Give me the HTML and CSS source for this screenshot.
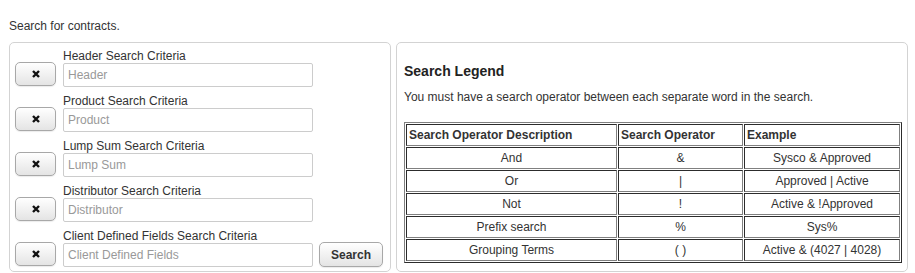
FILE: index.html
```html
<!DOCTYPE html>
<html lang="en">
<head>
    <meta charset="UTF-8">
    <title>Contract Search</title>
    <link rel="stylesheet" href="styles.css">
</head>
<body>
    <p class="intro">Search for contracts.</p>
    <div class="search-page">
        <div class="panel criteria-panel">
            <div class="criteria-row">
                <button class="clear-btn" title="Clear"><svg width="8" height="8" viewBox="0 0 8 8"><path d="M1 1L7 7M7 1L1 7" stroke="#111" stroke-width="2.4"/></svg></button>
                <div class="field">
                    <label for="header">Header Search Criteria</label>
                    <input type="text" id="header" placeholder="Header">
                </div>
            </div>
            <div class="criteria-row">
                <button class="clear-btn" title="Clear"><svg width="8" height="8" viewBox="0 0 8 8"><path d="M1 1L7 7M7 1L1 7" stroke="#111" stroke-width="2.4"/></svg></button>
                <div class="field">
                    <label for="product">Product Search Criteria</label>
                    <input type="text" id="product" placeholder="Product">
                </div>
            </div>
            <div class="criteria-row">
                <button class="clear-btn" title="Clear"><svg width="8" height="8" viewBox="0 0 8 8"><path d="M1 1L7 7M7 1L1 7" stroke="#111" stroke-width="2.4"/></svg></button>
                <div class="field">
                    <label for="lump-sum">Lump Sum Search Criteria</label>
                    <input type="text" id="lump-sum" placeholder="Lump Sum">
                </div>
            </div>
            <div class="criteria-row">
                <button class="clear-btn" title="Clear"><svg width="8" height="8" viewBox="0 0 8 8"><path d="M1 1L7 7M7 1L1 7" stroke="#111" stroke-width="2.4"/></svg></button>
                <div class="field">
                    <label for="distributor">Distributor Search Criteria</label>
                    <input type="text" id="distributor" placeholder="Distributor">
                </div>
            </div>
            <div class="criteria-row">
                <button class="clear-btn" title="Clear"><svg width="8" height="8" viewBox="0 0 8 8"><path d="M1 1L7 7M7 1L1 7" stroke="#111" stroke-width="2.4"/></svg></button>
                <div class="field">
                    <label for="client-fields">Client Defined Fields Search Criteria</label>
                    <input type="text" id="client-fields" placeholder="Client Defined Fields">
                </div>
                <button class="search-btn">Search</button>
            </div>
        </div>
        <div class="panel legend-panel">
            <h3>Search Legend</h3>
            <p>You must have a search operator between each separate word in the search.</p>
            <table class="legend-table">
                <thead>
                    <tr>
                        <th class="col-desc">Search Operator Description</th>
                        <th class="col-op">Search Operator</th>
                        <th>Example</th>
                    </tr>
                </thead>
                <tbody>
                    <tr><td>And</td><td>&amp;</td><td>Sysco &amp; Approved</td></tr>
                    <tr><td>Or</td><td>|</td><td>Approved | Active</td></tr>
                    <tr><td>Not</td><td>!</td><td>Active &amp; !Approved</td></tr>
                    <tr><td>Prefix search</td><td>%</td><td>Sys%</td></tr>
                    <tr><td>Grouping Terms</td><td>( )</td><td>Active &amp; (4027 | 4028)</td></tr>
                </tbody>
            </table>
        </div>
    </div>
</body>
</html>
```

FILE: styles.css
```css
body {
    font-family: "Liberation Sans", Arial, sans-serif;
    font-size: 12px;
    line-height: 14px;
    color: #333;
    margin: 0;
    padding: 0 7px 0 9px;
    background-color: white;
}
.intro {
    margin: 19px 0 9px;
}
.search-page {
    display: flex;
    gap: 5px;
}
.panel {
    border: 1px solid #d3d3d3;
    border-radius: 5px;
    background-color: white;
}
.criteria-panel {
    width: 382px;
    box-sizing: border-box;
    padding: 6px 5px 4px;
}
.criteria-row {
    display: flex;
    align-items: flex-end;
    margin-bottom: 7px;
}
.criteria-row:last-child {
    margin-bottom: 0;
}
.field {
    display: flex;
    flex-direction: column;
    margin-left: 7px;
}
label {
    color: #333;
}
input {
    width: 250px;
    height: 24px;
    box-sizing: border-box;
    margin: 0;
    padding: 0 4px;
    border: 1px solid #ccc;
    border-radius: 2px;
    font-family: "Liberation Sans", Arial, sans-serif;
    font-size: 12px;
    color: #333;
}
input::placeholder {
    color: #999;
}
button {
    font-family: "Liberation Sans", Arial, sans-serif;
    border: 1px solid #a8a8a8;
    border-radius: 5px;
    background: linear-gradient(#ffffff, #e4e4e4);
    box-shadow: 0 1px 1px rgba(0, 0, 0, 0.08);
    cursor: pointer;
    padding: 0;
}
.clear-btn {
    width: 41px;
    height: 24px;
    margin-bottom: 1px;
    display: flex;
    align-items: center;
    justify-content: center;
}
.search-btn {
    width: 64px;
    height: 25px;
    margin-left: 6px;
    font-size: 12px;
    font-weight: bold;
    color: #333;
}
.legend-panel {
    flex: 1;
    padding: 0 5px 6px 7px;
}
.legend-panel h3 {
    font-size: 14px;
    line-height: 16px;
    margin: 20px 0 11px;
    color: #222;
}
.legend-panel p {
    margin: 0 0 18px;
}
.legend-table {
    width: 100%;
    table-layout: fixed;
    border-collapse: separate;
    border-spacing: 1px;
    border: 1px outset #808080;
}
.legend-table th,
.legend-table td {
    box-sizing: border-box;
    border: 1px inset #808080;
    padding: 3px 2px;
    line-height: 14px;
    text-align: center;
}
.legend-table th {
    text-align: left;
    font-weight: bold;
}
.col-desc {
    width: 211px;
}
.col-op {
    width: 125px;
}
```
